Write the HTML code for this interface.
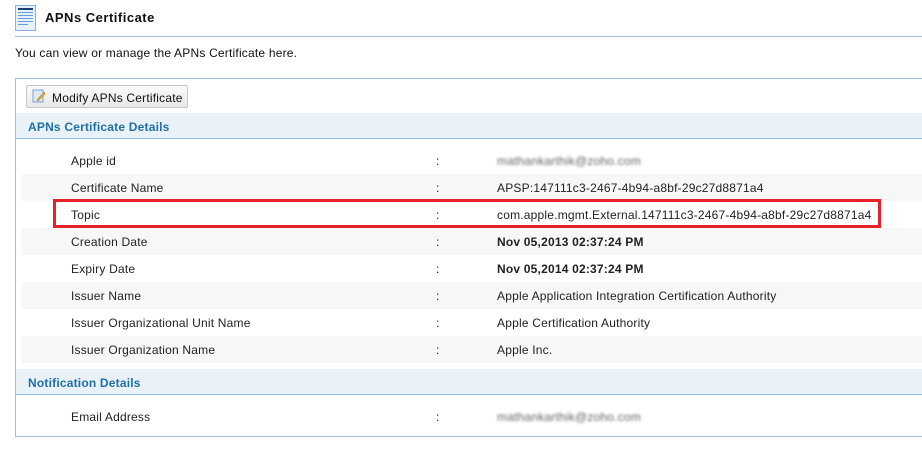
<!DOCTYPE html>
<html><head><style>
body{margin:0;width:922px;height:450px;background:#fff;font-family:"Liberation Sans",Arial,sans-serif;font-size:12px;color:#222;position:relative;overflow:hidden;letter-spacing:.2px}
.a{position:absolute}
.row{position:absolute;left:22px;width:920px;height:27px;line-height:29px}
.g{background:#f7f7f7}
.l{position:absolute;left:49px}
.c{position:absolute;left:414px}
.v{position:absolute;left:475px}
.b{font-weight:bold}
.blur{filter:blur(1.4px);color:#666}
.hd{position:absolute;left:16px;width:910px;height:26px;line-height:28px;background:#e9f1f9;color:#1f6fa6;font-weight:bold;padding-left:12px;box-sizing:border-box;border-bottom:1px solid #8fb8e2}
</style></head><body>
<svg class="a" style="left:15px;top:5px" width="21" height="26" viewBox="0 0 21 26"><rect x="0.5" y="0.5" width="20" height="25" fill="#e6f0fb" stroke="#8ab0d8"/><rect x="3" y="3" width="15" height="2" fill="#1c3f7a"/><g fill="#6a9fd6"><rect x="3" y="7" width="15" height="1"/><rect x="3" y="10" width="15" height="1"/><rect x="3" y="13" width="15" height="1"/><rect x="3" y="16" width="15" height="1"/><rect x="3" y="19" width="10" height="1"/></g></svg>
<div class="a b" style="left:45px;top:10px;font-size:13px;color:#111;letter-spacing:.5px">APNs Certificate</div>
<div class="a" style="left:15px;top:36px;width:910px;height:1px;background:#9cbfe2"></div>
<div class="a" style="left:15px;top:46px;color:#111">You can view or manage the APNs Certificate here.</div>
<div class="a" style="left:15px;top:78px;width:920px;height:357px;border:1px solid #9cbfe2;border-right:none"></div>
<div class="a" style="left:26px;top:85px;width:160px;height:21px;background:linear-gradient(#fafafa,#e8e8e8);border:1px solid #c6c6c6;border-radius:2px"></div>
<svg class="a" style="left:32px;top:89px" width="14" height="14"><rect x="1" y="1" width="10" height="12" fill="#dbe9f8" stroke="#7aa3d0"/><path d="M5 11 L12 3 L13 5 L6 12 Z" fill="#f2b640" stroke="#b07a10" stroke-width=".6"/></svg>
<div class="a" style="left:52px;top:91px;color:#111">Modify APNs Certificate</div>
<div class="hd" style="top:113px">APNs Certificate Details</div>
<div class="row" style="top:147px"><span class="l">Apple id</span><span class="c">:</span><span class="v blur">mathankarthik@zoho.com</span></div>
<div class="row g" style="top:174px"><span class="l">Certificate Name</span><span class="c">:</span><span class="v">APSP:147111c3-2467-4b94-a8bf-29c27d8871a4</span></div>
<div class="row" style="top:201px"><span class="l">Topic</span><span class="c">:</span><span class="v">com.apple.mgmt.External.147111c3-2467-4b94-a8bf-29c27d8871a4</span></div>
<div class="row g" style="top:228px"><span class="l">Creation Date</span><span class="c">:</span><span class="v b">Nov 05,2013 02:37:24 PM</span></div>
<div class="row" style="top:255px"><span class="l">Expiry Date</span><span class="c">:</span><span class="v b">Nov 05,2014 02:37:24 PM</span></div>
<div class="row g" style="top:282px"><span class="l">Issuer Name</span><span class="c">:</span><span class="v">Apple Application Integration Certification Authority</span></div>
<div class="row" style="top:309px"><span class="l">Issuer Organizational Unit Name</span><span class="c">:</span><span class="v">Apple Certification Authority</span></div>
<div class="row g" style="top:336px"><span class="l">Issuer Organization Name</span><span class="c">:</span><span class="v">Apple Inc.</span></div>
<div class="hd" style="top:369px">Notification Details</div>
<div class="row" style="top:403px"><span class="l">Email Address</span><span class="c">:</span><span class="v blur">mathankarthik@zoho.com</span></div>
<div class="a" style="left:53px;top:199px;width:822px;height:23px;border:3px solid #e8202a"></div>
</body></html>
